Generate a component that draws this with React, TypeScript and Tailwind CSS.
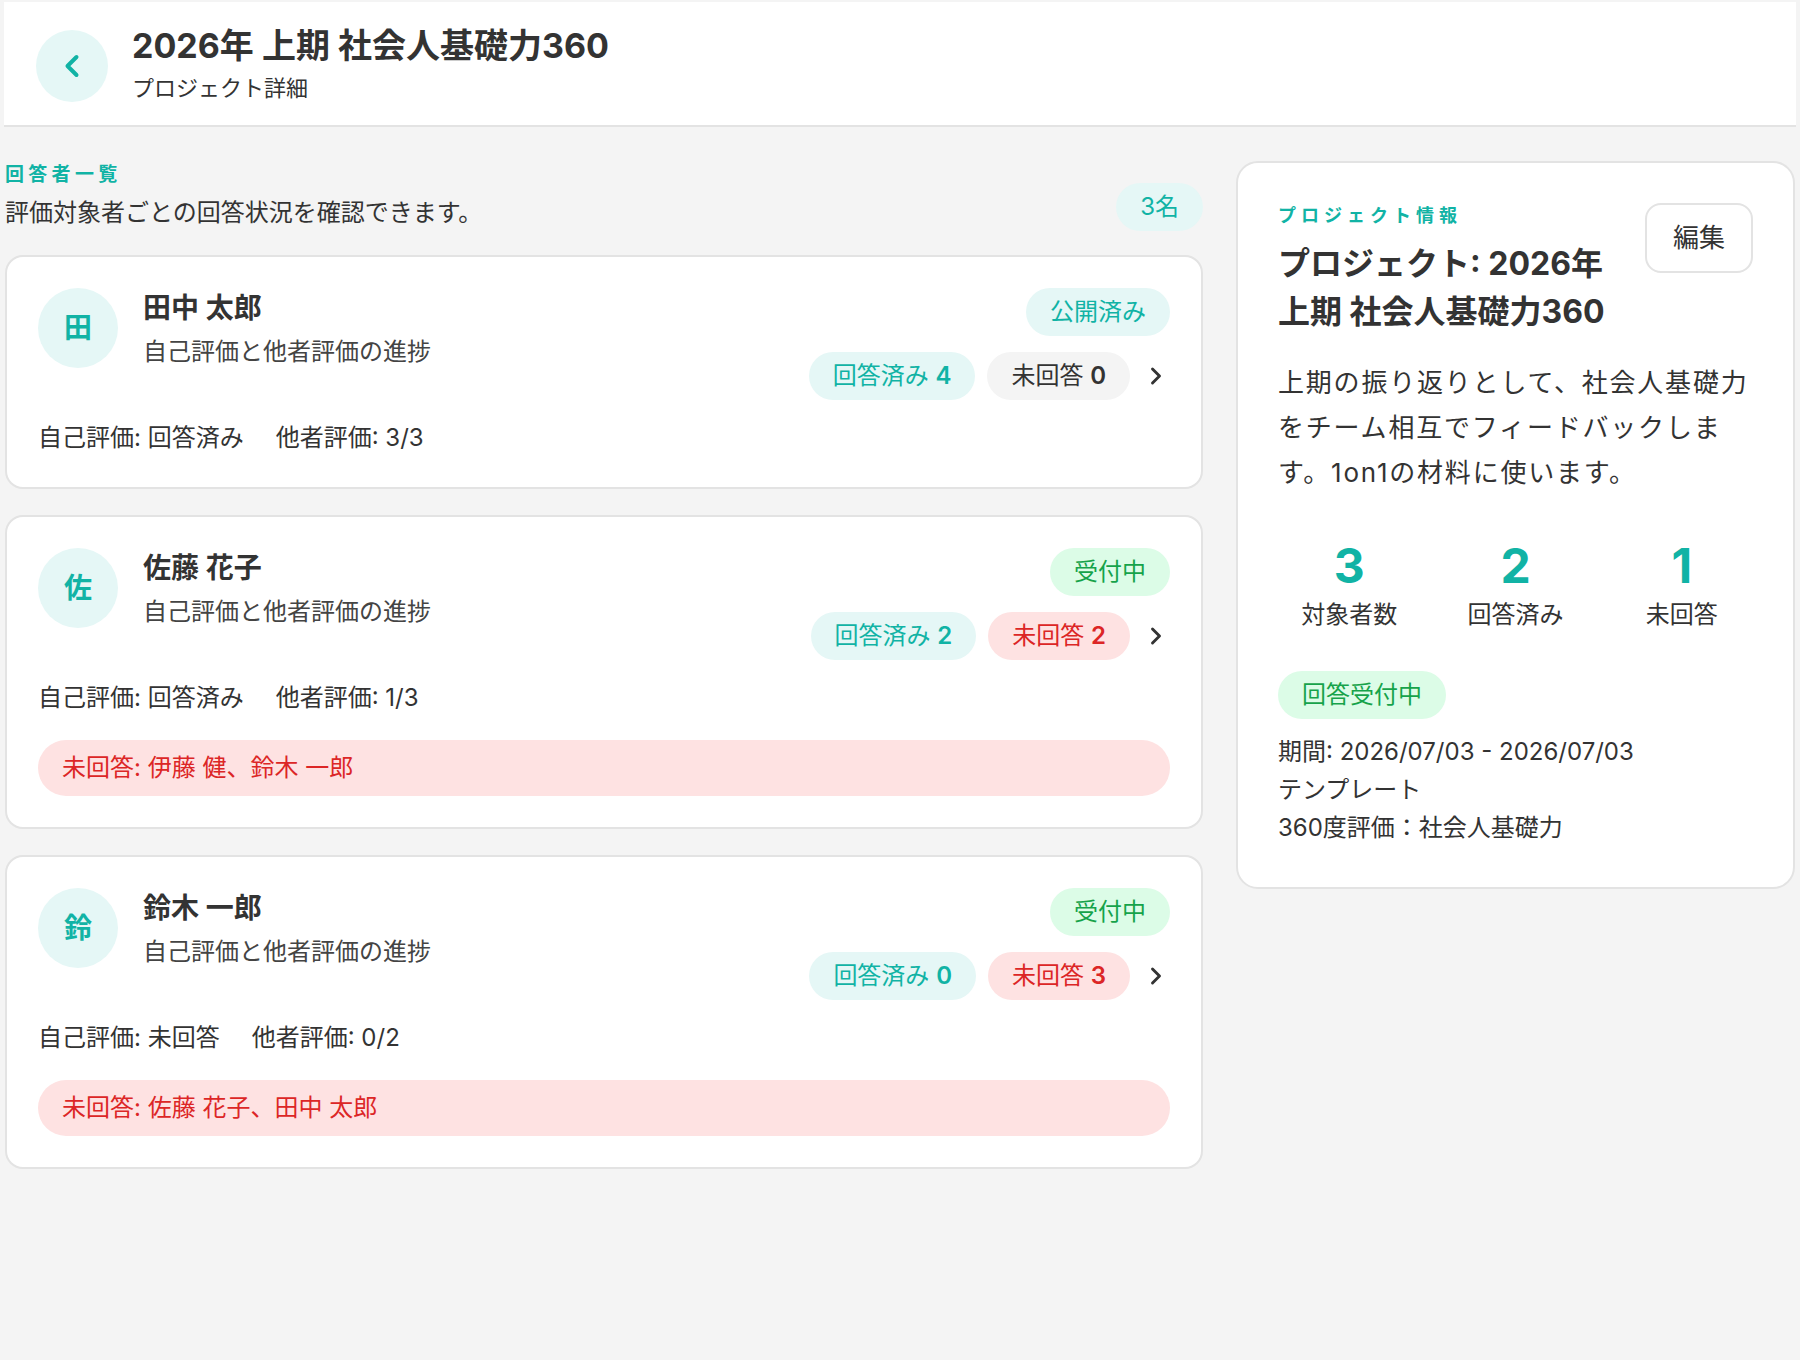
import React from "react";
import { ChevronLeft, ChevronRight } from "lucide-react";

type Respondent = {
  initial: string;
  name: string;
  status: "published" | "open";
  answered: number;
  unanswered: number;
  self: string;
  other: string;
  missing?: string;
};

const respondents: Respondent[] = [
  {
    initial: "田",
    name: "田中 太郎",
    status: "published",
    answered: 4,
    unanswered: 0,
    self: "回答済み",
    other: "3/3",
  },
  {
    initial: "佐",
    name: "佐藤 花子",
    status: "open",
    answered: 2,
    unanswered: 2,
    self: "回答済み",
    other: "1/3",
    missing: "伊藤 健、鈴木 一郎",
  },
  {
    initial: "鈴",
    name: "鈴木 一郎",
    status: "open",
    answered: 0,
    unanswered: 3,
    self: "未回答",
    other: "0/2",
    missing: "佐藤 花子、田中 太郎",
  },
];

function RespondentCard({ r }: { r: Respondent }) {
  return (
    <div className="rounded-[18px] border-2 border-[#e3e3e3] bg-white p-[31px]">
      <div className="flex items-start justify-between">
        <div className="flex items-start gap-[25px]">
          <div className="flex h-20 w-20 shrink-0 items-center justify-center rounded-full bg-[#e5f7f6] text-[28px] font-bold text-[#11b3a5]">
            {r.initial}
          </div>
          <div>
            <div className="text-[28px] font-bold leading-[40px] text-[#333333]">{r.name}</div>
            <div className="mt-[6px] text-[24px] leading-[36px] text-[#444444]">自己評価と他者評価の進捗</div>
          </div>
        </div>
        <div className="flex flex-col items-end gap-4">
          {r.status === "published" ? (
            <span className="rounded-full bg-[#e5f7f6] px-6 text-[24px] leading-[48px] text-[#11b3a5]">公開済み</span>
          ) : (
            <span className="rounded-full bg-[#dcfce7] px-6 text-[24px] leading-[48px] text-[#16a34a]">受付中</span>
          )}
          <div className="flex items-center gap-3">
            <span className="rounded-full bg-[#e5f7f6] px-6 text-[24px] leading-[48px] text-[#11b3a5]">
              回答済み <span className="font-semibold">{r.answered}</span>
            </span>
            {r.unanswered > 0 ? (
              <span className="rounded-full bg-[#fee2e2] px-6 text-[24px] leading-[48px] text-[#dc2626]">
                未回答 <span className="font-semibold">{r.unanswered}</span>
              </span>
            ) : (
              <span className="rounded-full bg-[#f4f4f4] px-6 text-[24px] leading-[48px] text-[#333333]">
                未回答 <span className="font-semibold">{r.unanswered}</span>
              </span>
            )}
            <ChevronRight size={28} strokeWidth={2.5} className="text-[#333333]" />
          </div>
        </div>
      </div>
      <div className="mt-5 flex gap-[32px] text-[24px] leading-[36px] text-[#333333]">
        <span>自己評価: {r.self}</span>
        <span>他者評価: {r.other}</span>
      </div>
      {r.missing && (
        <div className="mt-6 rounded-full bg-[#fee2e2] px-6 py-[10px] text-[24px] leading-[36px] text-[#dc2626]">
          未回答: {r.missing}
        </div>
      )}
    </div>
  );
}

export default function App() {
  return (
    <div className="min-h-screen bg-[#f4f4f4] px-[4px] pt-[2px] font-[family-name:Inter,'Noto_Sans_CJK_JP',sans-serif] text-[#333333]">
      <header className="flex items-start gap-6 border-b-2 border-[#e3e3e3] bg-white pb-[20px] pl-8 pt-[22px]">
        <div className="mt-[6px] flex h-[72px] w-[72px] shrink-0 items-center justify-center rounded-full bg-[#e5f7f6] text-[#11b3a5]">
          <ChevronLeft size={36} strokeWidth={2.67} />
        </div>
        <div>
          <h1 className="text-[34px] font-bold leading-[44px] text-[#333333]">2026年 上期 社会人基礎力360</h1>
          <div className="mt-[4px] text-[22px] leading-[33px] text-[#333333]">プロジェクト詳細</div>
        </div>
      </header>

      <main className="flex items-start gap-[33px] px-[1px] pt-[34px]">
        <section className="min-w-0 flex-1">
          <div className="flex items-end justify-between">
            <div>
              <div className="text-[19px] font-bold leading-[27px] tracking-[4.3px] text-[#11b3a5]">回答者一覧</div>
              <div className="mt-[7px] text-[24px] leading-[36px] text-[#333333]">
                評価対象者ごとの回答状況を確認できます。
              </div>
            </div>
            <span className="rounded-full bg-[#e5f7f6] px-[24px] text-[24px] leading-[48px] text-[#11b3a5]">3名</span>
          </div>
          <div className="mt-6 flex flex-col gap-[26px]">
            {respondents.map((r) => (
              <RespondentCard key={r.name} r={r} />
            ))}
          </div>
        </section>

        <aside className="w-[559px] shrink-0 rounded-[22px] border-2 border-[#e3e3e3] bg-white p-10">
          <div className="flex items-start justify-between gap-4">
            <div className="min-w-0">
              <div className="text-[18px] font-bold leading-[26px] tracking-[5px] text-[#11b3a5]">プロジェクト情報</div>
              <div className="mt-[11px] text-[32px] font-bold leading-[48px] text-[#333333]">
                プロジェクト: 2026年 上期 社会人基礎力360
              </div>
            </div>
            <button className="shrink-0 rounded-[16px] border-2 border-[#e3e3e3] bg-white px-[26px] py-[13px] text-[26px] leading-[40px] text-[#333333]">
              編集
            </button>
          </div>
          <p className="mt-6 text-[26px] leading-[45px] tracking-[1.8px] text-[#333333]">
            上期の振り返りとして、社会人基礎力をチーム相互でフィードバックします。1on1の材料に使います。
          </p>
          <div className="mt-[43px] grid grid-cols-3 gap-6 text-center">
            {[
              ["3", "対象者数"],
              ["2", "回答済み"],
              ["1", "未回答"],
            ].map(([n, l]) => (
              <div key={l}>
                <div className="text-[48px] font-bold leading-[56px] text-[#11b3a5]">{n}</div>
                <div className="mt-[3px] text-[24px] leading-[36px] text-[#333333]">{l}</div>
              </div>
            ))}
          </div>
          <div className="mt-[38px] flex">
            <span className="rounded-full bg-[#dcfce7] px-6 text-[24px] leading-[48px] text-[#16a34a]">回答受付中</span>
          </div>
          <div className="mt-[14px] text-[24px] leading-[38px] text-[#333333]">
            <div>期間: 2026/07/03 - 2026/07/03</div>
            <div>テンプレート</div>
            <div>360度評価：社会人基礎力</div>
          </div>
        </aside>
      </main>
    </div>
  );
}
